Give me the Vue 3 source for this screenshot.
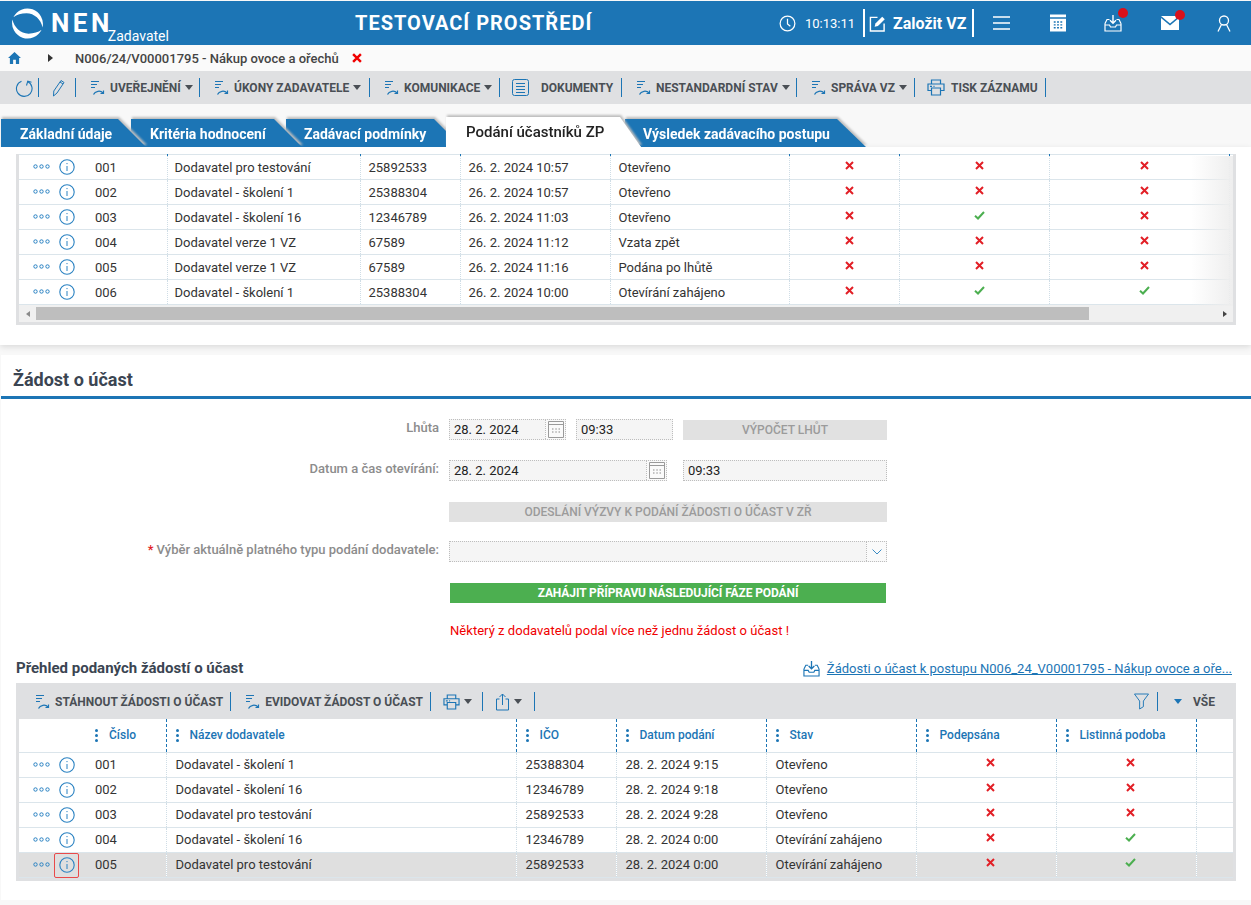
<template>
  <div class="page">
    <svg class="defs" width="0" height="0">
      <symbol id="flow" viewBox="0 0 17 17">
        <path d="M1 2.500h8M1 5.500h6M1 8.500h4" fill="none" stroke="currentColor" stroke-width="1.200" />
        <path d="M3.500 15.500c1.500-3.500 7-4.500 9.500-1.500M13.500 11.500v3h-3" fill="none" stroke="currentColor" stroke-width="1.200" />
      </symbol>
      <symbol id="info" viewBox="0 0 16 16">
        <circle cx="8" cy="8" r="7.200" fill="none" stroke="currentColor" stroke-width="1.100" />
        <path d="M8 7v5" stroke="currentColor" stroke-width="1" />
        <circle cx="8" cy="4.600" r=".7" fill="currentColor" />
      </symbol>
      <symbol id="dots" viewBox="0 0 17 5">
        <circle cx="2.500" cy="2.500" r="1.700" fill="none" stroke="currentColor" stroke-width="1" />
        <circle cx="8.500" cy="2.500" r="1.700" fill="none" stroke="currentColor" stroke-width="1" />
        <circle cx="14.500" cy="2.500" r="1.700" fill="none" stroke="currentColor" stroke-width="1" />
      </symbol>
      <symbol id="no" viewBox="0 0 9 9">
        <path d="M1 1l7 7M8 1l-7 7" stroke="#e21f26" stroke-width="2" fill="none" />
      </symbol>
      <symbol id="yes" viewBox="0 0 11 9">
        <path d="M1 4.800l3 2.700 6-6.500" stroke="#4caf50" stroke-width="2" fill="none" />
      </symbol>
      <symbol id="cal" viewBox="0 0 16 17">
        <path d="M.5.500h15v16H.5zM.5 3.500h15" fill="none" stroke="#9a9a9a" stroke-width="1" />
        <path d="M4 8h1.500M7.300 8h1.500M10.500 8h1.500M4 11h1.500M7.300 11h1.500M10.500 11h1.500" stroke="#8a8a8a" stroke-width="1.200" />
      </symbol>
      <symbol id="print" viewBox="0 0 18 17">
        <path d="M4.500 5V1h9v4M4.500 11.500h-3.500V5h16v6.500h-3.500M4.500 9h9v7h-9z" fill="none" stroke="currentColor" stroke-width="1.200" />
        <path d="M3 7.300h2M6.500 7.300h1" stroke="currentColor" stroke-width="1.200" />
      </symbol>
      <symbol id="inbox" viewBox="0 0 18 18">
        <path d="M1 9.500v7.500h16V9.500M1 9.500l2-4h2.500M17 9.500l-2-4h-2.500M1 11h4.500l1 2h5l1-2H17" fill="none" stroke="currentColor" stroke-width="1.200" />
        <path d="M9 1v8M6 6.300l3 3 3-3" fill="none" stroke="currentColor" stroke-width="1.400" />
      </symbol>
    </svg>

    <header class="topbar">
      <div class="brand">
        <svg class="logo" viewBox="0 0 34 34">
          <path d="M2.500 10.500A16 16 0 0 1 32.500 21C31 13 24 6.500 16 6.500 10.500 6.500 6 8 2.500 10.500z" fill="#fff" />
          <path d="M31.500 23.500A16 16 0 0 1 1.500 13C3 21 10 27.500 18 27.500 23.500 27.500 28 26 31.500 23.500z" fill="#fff" />
        </svg>
        <span class="nen">NEN</span>
        <span class="role">Zadavatel</span>
      </div>
      <div class="env">TESTOVACÍ PROSTŘEDÍ</div>
      <div class="clock">
        <svg viewBox="0 0 18 18" width="17" height="17"><circle cx="9" cy="9" r="7.800" fill="none" stroke="#fff" stroke-width="1.300" /><path d="M9 4v5.500l3 2.500" fill="none" stroke="#fff" stroke-width="1.300" /></svg>
        <span>10:13:11</span>
      </div>
      <div class="create">
        <svg viewBox="0 0 18 18" width="17" height="17"><path d="M9 2.500H1.500v14.500h14.500V9" fill="none" stroke="#fff" stroke-width="1.500" /><path d="M6 12.500l.8-3.500L14 1.800l2.700 2.700L9.500 11.700z" fill="#fff" /></svg>
        <span>Založit VZ</span>
      </div>
      <div class="head-icons">
        <svg viewBox="0 0 18 16" width="18" height="16"><path d="M0 2h17M0 8h17M0 14h17" stroke="#fff" stroke-width="1.600" /></svg>
        <svg viewBox="0 0 17 18" width="16" height="18"><path d="M0 0h17v3H0zM0 4.500h17V18H0z" fill="#fff" /><path d="M4 8h2M7.500 8h2M11 8h2M4 11h2M7.500 11h2M11 11h2M4 14h2M7.500 14h2M11 14h2" stroke="#1c75b5" stroke-width="1.500" /></svg>
        <span class="badged"><svg width="18" height="18"><use href="#inbox" /></svg><i></i></span>
        <span class="badged"><svg viewBox="0 0 18 14" width="18" height="14"><path d="M0 0h18L9 7.500zM0 2l9 7.500L18 2v12H0z" fill="#fff" /></svg><i></i></span>
        <svg viewBox="0 0 14 17" width="14" height="17"><circle cx="7" cy="5.500" r="4.500" fill="none" stroke="#fff" stroke-width="1.300" /><path d="M4.500 9.500L1 16.500M9.500 9.500l3.500 7" fill="none" stroke="#fff" stroke-width="1.300" /></svg>
      </div>
    </header>

    <nav class="crumbs">
      <svg viewBox="0 0 14 13" width="13" height="12"><path d="M7 0L0 6.500h2V13h3.500V8.500h3V13H12V6.500h2z" fill="#1c75b5" /></svg>
      <span class="crumb-arrow"></span>
      <span class="crumb-text">N006/24/V00001795 - Nákup ovoce a ořechů</span>
      <svg viewBox="0 0 9 9" width="10" height="10"><path d="M1 1l7 7M8 1l-7 7" stroke="#f00000" stroke-width="2.200" /></svg>
    </nav>

    <div class="toolbar">
      <svg class="tool-refresh" viewBox="0 0 18 18" width="18" height="18"><path d="M6.500 2.300a7.800 7.800 0 1 0 6 .2" fill="none" stroke="currentColor" stroke-width="1.100" /><path d="M11.500 6.500l1.300-4.300 3.700 1" fill="none" stroke="currentColor" stroke-width="1.100" /></svg>
      <b class="sep refresh-sep"></b>
      <svg class="tool-pen" viewBox="0 0 13 18" width="13" height="18"><path d="M1.500 17l.3-5L9 1.500l3 2-7 10.500zM8 3l3 2" fill="none" stroke="currentColor" stroke-width="1" /></svg>
      <b class="sep pen-sep"></b>
      <template v-for="t in tools" :key="t.label">
        <div class="tool" :style="{ width: t.width + 'px' }">
          <svg v-if="t.icon === 'flow'" class="ticon" width="17" height="17"><use href="#flow" /></svg>
          <svg v-else-if="t.icon === 'doc'" class="ticon doc" viewBox="0 0 17 17" width="17" height="17"><path d="M2.500.500h12a2 2 0 0 1 2 2v12a2 2 0 0 1-2 2h-12a2 2 0 0 1-2-2v-12a2 2 0 0 1 2-2zM4 4.500h9M4 7.500h9M4 10.500h9M4 13.500h9" fill="none" stroke="currentColor" stroke-width="1" /></svg>
          <svg v-else class="ticon print-icon" width="18" height="17"><use href="#print" /></svg>
          <span :class="{ 'label-gap': t.icon === 'doc', 'label-print': t.icon === 'print' }">{{ t.label }}</span>
          <i v-if="t.caret" class="caret"></i>
        </div>
        <b class="sep"></b>
      </template>
    </div>

    <div class="tabs">
      <div v-for="(tab, i) in tabs" :key="tab.label" class="tab-wrap" :class="'tab-' + (i + 1)">
        <div class="tab">{{ tab.label }}</div>
      </div>
    </div>

    <section class="card top-card">
      <div class="grid-box">
        <div class="ticks">
          <i v-for="x in [148, 341, 441, 591, 770, 880, 1030, 1210]" :key="x" :style="{ left: x + 'px' }"></i>
        </div>
        <table class="grid first-grid">
          <colgroup>
            <col v-for="(w, i) in topCols" :key="i" :style="{ width: w + 'px' }" />
          </colgroup>
          <tbody>
            <tr v-for="r in topRows" :key="r.no">
              <td class="acts">
                <svg class="dots" width="17" height="5"><use href="#dots" /></svg>
                <svg class="info" width="16" height="16"><use href="#info" /></svg>
              </td>
              <td>{{ r.no }}</td>
              <td class="name-cell">{{ r.name }}</td>
              <td>{{ r.ico }}</td>
              <td>{{ r.date }}</td>
              <td>{{ r.state }}</td>
              <td v-for="(f, j) in r.flags" :key="j" class="flag">
                <svg v-if="f" width="11" height="9"><use href="#yes" /></svg>
                <svg v-else width="9" height="9"><use href="#no" /></svg>
              </td>
              <td></td>
            </tr>
          </tbody>
        </table>
        <div class="fade"></div>
        <div class="hscroll">
          <i class="arrow-left"></i>
          <div class="thumb"></div>
          <i class="arrow-right"></i>
        </div>
      </div>
    </section>

    <section class="card bottom-card">
      <h2 class="title">Žádost o účast</h2>

      <div class="form">
        <div class="row">
          <label>Lhůta</label>
          <div class="field date-short"><span>28. 2. 2024</span><em><svg width="16" height="17"><use href="#cal" /></svg></em></div>
          <div class="field time-short"><span>09:33</span></div>
          <div class="btn-off calc">VÝPOČET LHŮT</div>
        </div>
        <div class="row">
          <label>Datum a čas otevírání:</label>
          <div class="field date-long"><span>28. 2. 2024</span><em><svg width="16" height="17"><use href="#cal" /></svg></em></div>
          <div class="field time-long"><span>09:33</span></div>
        </div>
        <div class="row">
          <label></label>
          <div class="btn-off wide">ODESLÁNÍ VÝZVY K PODÁNÍ ŽÁDOSTI O ÚČAST V ZŘ</div>
        </div>
        <div class="row row-tight">
          <label><span class="req">*</span>Výběr aktuálně platného typu podání dodavatele:</label>
          <div class="field select">
            <span></span>
            <em><svg viewBox="0 0 10 6" width="10" height="6"><path d="M.5.500L5 5 9.500.500" fill="none" stroke="#3c8cc4" stroke-width="1" /></svg></em>
          </div>
        </div>
        <div class="row">
          <label></label>
          <div class="btn-green">ZAHÁJIT PŘÍPRAVU NÁSLEDUJÍCÍ FÁZE PODÁNÍ</div>
        </div>
      </div>

      <p class="warn">Některý z dodavatelů podal více než jednu žádost o účast !</p>

      <div class="sub-head">
        <h3>Přehled podaných žádostí o účast</h3>
        <a class="file-link">
          <svg width="17" height="17" viewBox="0 0 18 18"><use href="#inbox" /></svg>
          <span>Žádosti o účast k postupu N006_24_V00001795 - Nákup ovoce a oře...</span>
        </a>
      </div>

      <div class="grid-box second">
        <div class="grid-tools">
          <div class="tool2"><svg class="ticon" width="17" height="17"><use href="#flow" /></svg><span>STÁHNOUT ŽÁDOSTI O ÚČAST</span></div>
          <b class="sep"></b>
          <div class="tool2"><svg class="ticon" width="17" height="17"><use href="#flow" /></svg><span>EVIDOVAT ŽÁDOST O ÚČAST</span></div>
          <b class="sep"></b>
          <div class="mini"><svg class="ticon" width="17" height="16" viewBox="0 0 18 17"><use href="#print" /></svg><i class="caret"></i></div>
          <b class="sep"></b>
          <div class="mini"><svg class="ticon" viewBox="0 0 14 18" width="15" height="18"><path d="M4 6H1v11h12V6h-3M7 12V1M4 4l3-3 3 3" fill="none" stroke="currentColor" stroke-width="1" /></svg><i class="caret"></i></div>
          <b class="sep"></b>
          <div class="tools-right">
            <svg class="ticon" viewBox="0 0 16 17" width="15" height="17"><path d="M.5.500h15L10 8v6l-4 2.500V8z" fill="none" stroke="currentColor" stroke-width="1" /></svg>
            <b class="sep"></b>
            <i class="caret blue"></i>
            <span class="vse">VŠE</span>
          </div>
        </div>
        <table class="grid wide-head">
          <colgroup>
            <col v-for="(w, i) in bottomCols" :key="i" :style="{ width: w + 'px' }" />
          </colgroup>
          <thead>
            <tr>
              <th class="no-line"></th>
              <th v-for="h in heads" :key="h" :class="{ 'no-line': h === 'Číslo' }">
                <span class="kebab"><i></i><i></i><i></i></span>{{ h }}
              </th>
              <th></th>
            </tr>
          </thead>
          <tbody>
            <tr v-for="r in bottomRows" :key="r.no" :class="{ selected: r.selected }">
              <td class="acts">
                <svg class="dots" width="17" height="5"><use href="#dots" /></svg>
                <span class="info-wrap" :class="{ focused: r.selected }"><svg class="info" width="16" height="16"><use href="#info" /></svg></span>
              </td>
              <td>{{ r.no }}</td>
              <td>{{ r.name }}</td>
              <td>{{ r.ico }}</td>
              <td>{{ r.date }}</td>
              <td>{{ r.state }}</td>
              <td v-for="(f, j) in r.flags" :key="j" class="flag">
                <svg v-if="f" width="11" height="9"><use href="#yes" /></svg>
                <svg v-else width="9" height="9"><use href="#no" /></svg>
              </td>
              <td></td>
            </tr>
          </tbody>
        </table>
      </div>
    </section>
  </div>
</template>

<script setup>
const tools = [
  { label: 'UVEŘEJNĚNÍ', icon: 'flow', caret: true, width: 123 },
  { label: 'ÚKONY ZADAVATELE', icon: 'flow', caret: true, width: 169 },
  { label: 'KOMUNIKACE', icon: 'flow', caret: true, width: 129 },
  { label: 'DOKUMENTY', icon: 'doc', caret: false, width: 121 },
  { label: 'NESTANDARDNÍ STAV', icon: 'flow', caret: true, width: 174 },
  { label: 'SPRÁVA VZ', icon: 'flow', caret: true, width: 117 },
  { label: 'TISK ZÁZNAMU', icon: 'print', caret: false, width: 130 }
];

const tabs = [
  { label: 'Základní údaje' },
  { label: 'Kritéria hodnocení' },
  { label: 'Zadávací podmínky' },
  { label: 'Podání účastníků ZP' },
  { label: 'Výsledek zadávacího postupu' }
];

const topCols = [68, 80, 193, 100, 150, 179, 110, 150, 180, 4];
const bottomCols = [68, 79, 350, 100, 150, 150, 140, 140, 37];
const heads = ['Číslo', 'Název dodavatele', 'IČO', 'Datum podání', 'Stav', 'Podepsána', 'Listinná podoba'];

const topRows = [
  { no: '001', name: 'Dodavatel pro testování', ico: '25892533', date: '26. 2. 2024 10:57', state: 'Otevřeno', flags: [0, 0, 0] },
  { no: '002', name: 'Dodavatel - školení 1', ico: '25388304', date: '26. 2. 2024 10:57', state: 'Otevřeno', flags: [0, 0, 0] },
  { no: '003', name: 'Dodavatel - školení 16', ico: '12346789', date: '26. 2. 2024 11:03', state: 'Otevřeno', flags: [0, 1, 0] },
  { no: '004', name: 'Dodavatel verze 1 VZ', ico: '67589', date: '26. 2. 2024 11:12', state: 'Vzata zpět', flags: [0, 0, 0] },
  { no: '005', name: 'Dodavatel verze 1 VZ', ico: '67589', date: '26. 2. 2024 11:16', state: 'Podána po lhůtě', flags: [0, 0, 0] },
  { no: '006', name: 'Dodavatel - školení 1', ico: '25388304', date: '26. 2. 2024 10:00', state: 'Otevírání zahájeno', flags: [0, 1, 1] }
];

const bottomRows = [
  { no: '001', name: 'Dodavatel - školení 1', ico: '25388304', date: '28. 2. 2024 9:15', state: 'Otevřeno', flags: [0, 0] },
  { no: '002', name: 'Dodavatel - školení 16', ico: '12346789', date: '28. 2. 2024 9:18', state: 'Otevřeno', flags: [0, 0] },
  { no: '003', name: 'Dodavatel pro testování', ico: '25892533', date: '28. 2. 2024 9:28', state: 'Otevřeno', flags: [0, 0] },
  { no: '004', name: 'Dodavatel - školení 16', ico: '12346789', date: '28. 2. 2024 0:00', state: 'Otevírání zahájeno', flags: [0, 1] },
  { no: '005', name: 'Dodavatel pro testování', ico: '25892533', date: '28. 2. 2024 0:00', state: 'Otevírání zahájeno', flags: [0, 1], selected: true }
];
</script>

<style>
html,
body {
  margin: 0;
  background: #f8f8f8;
}
</style>

<style scoped>
.page {
  width: 1251px;
  height: 905px;
  overflow: hidden;
  background: #f8f8f8;
  font-family: Roboto, "Liberation Sans", sans-serif;
  font-size: 13px;
  color: #333;
}

.defs {
  position: absolute;
}

.topbar {
  display: flex;
  align-items: center;
  height: 44px;
  margin-top: 1px;
  background: #1c75b5;
  color: #fff;
}

.brand {
  display: flex;
  width: 355px;
  flex: none;
  align-items: center;
  padding-left: 11px;
  box-sizing: border-box;
}

.logo {
  width: 33px;
  height: 33px;
}

.nen {
  margin-left: 7px;
  font-size: 26px;
  font-weight: 700;
  letter-spacing: 3.500px;
  line-height: 30px;
}

.role {
  margin: 26px 0 0 -5px;
  font-size: 14px;
}

.env {
  width: 424px;
  flex: none;
  font-size: 20px;
  font-weight: 700;
  letter-spacing: 1px;
}

.clock {
  display: flex;
  width: 86px;
  flex: none;
  align-items: center;
  gap: 9px;
  height: 28px;
  border-right: 2px solid #fff;
  box-sizing: border-box;
}

.create {
  display: flex;
  width: 109px;
  flex: none;
  align-items: center;
  gap: 7px;
  height: 28px;
  padding-left: 4px;
  border-right: 2px solid #fff;
  box-sizing: border-box;
  font-size: 16px;
  font-weight: 700;
}

.head-icons {
  display: flex;
  align-items: center;
  gap: 38.500px;
  margin-left: 19px;
}

.badged {
  position: relative;
  display: flex;
}

.badged i {
  position: absolute;
  top: -6px;
  right: -6px;
  width: 10px;
  height: 10px;
  border-radius: 50%;
  background: #d8111c;
}

.crumbs {
  display: flex;
  align-items: center;
  height: 26px;
  padding-left: 8px;
  background: #fafafa;
}

.crumb-arrow {
  width: 0;
  height: 0;
  margin: 0 22px 0 27px;
  border-top: 4px solid transparent;
  border-bottom: 4px solid transparent;
  border-left: 5px solid #333;
}

.crumb-text {
  width: 277px;
  font-size: 13px;
  font-weight: 500;
  color: #444;
  white-space: nowrap;
}

.toolbar {
  display: flex;
  align-items: center;
  height: 33px;
  padding-left: 15px;
  background: #dfe0e2;
  color: #1c75b5;
}

.sep {
  flex: none;
  width: 1px;
  height: 19px;
  background: #1c75b5;
}

.refresh-sep {
  margin: 0 13px 0 5px;
}

.pen-sep {
  margin-left: 10px;
}

.tool-pen {
  flex: none;
}

.tool {
  display: flex;
  flex: none;
  align-items: center;
  padding-left: 14px;
  box-sizing: border-box;
  color: #1c75b5;
}

.tool span {
  margin-left: 3px;
  font-size: 12px;
  font-weight: 700;
  color: #4a4f55;
  white-space: nowrap;
}

.tool .label-gap {
  margin-left: 12px;
}

.tool .label-print {
  margin-left: 6px;
}

.tool .doc {
  margin-left: -2px;
}

.print-icon {
  margin-left: -2px;
}

.ticon {
  flex: none;
}

.caret {
  flex: none;
  width: 0;
  height: 0;
  margin-left: 4px;
  border-top: 5px solid #4a4f55;
  border-left: 4px solid transparent;
  border-right: 4px solid transparent;
}

.caret.blue {
  border-top-color: #1c75b5;
}

.tabs {
  display: flex;
  height: 30px;
  margin-top: 13px;
  padding-left: 1px;
}

.tab-wrap {
  position: relative;
  flex: none;
  filter: drop-shadow(1px -2px 1px #bdbdbd);
}

.tab {
  display: flex;
  align-items: center;
  height: 30px;
  padding-top: 3px;
  box-sizing: border-box;
  background: #1c75b5;
  color: #fff;
  font-size: 14px;
  font-weight: 700;
  white-space: nowrap;
}

.tab-1 {
  z-index: 4;
  width: 146px;
}

.tab-1 .tab {
  padding-left: 19px;
  clip-path: polygon(0 2px, 117px 2px, 145px 30px, 0 30px);
}

.tab-2 {
  z-index: 3;
  width: 171px;
  margin-left: -16px;
}

.tab-2 .tab {
  padding-left: 19px;
  clip-path: polygon(0 2px, 143px 2px, 171px 30px, 0 30px);
}

.tab-3 {
  z-index: 2;
  width: 176px;
  margin-left: -16px;
}

.tab-3 .tab {
  padding-left: 18px;
  clip-path: polygon(0 2px, 148px 2px, 176px 30px, 0 30px);
}

.tab-4 {
  z-index: 5;
  width: 196px;
  margin-left: -16px;
}

.tab-4 .tab {
  padding: 0 0 1px 20px;
  background: #fff;
  color: #222;
  font-size: 15px;
  font-weight: 500;
  clip-path: polygon(0 0, 174px 0, 195px 30px, 0 30px);
}

.tab-5 {
  z-index: 1;
  width: 241px;
  margin-left: -17px;
}

.tab-5 .tab {
  padding-left: 18px;
  clip-path: polygon(0 2px, 212px 2px, 241px 30px, 16px 30px, 0 13px);
}

.card {
  background: #fff;
}

.top-card {
  height: 198px;
  padding: 5px 15px 0 16px;
  box-sizing: border-box;
  box-shadow: 0 2px 6px rgba(0, 0, 0, 0.12);
}

.grid-box {
  position: relative;
  border: 3px solid #dfe0e2;
  border-width: 0 3px 3px;
  background: #fff;
}

.ticks i {
  position: absolute;
  top: 0;
  width: 1px;
  height: 2px;
  background: #1c75b5;
}

.grid {
  width: 1214px;
  table-layout: fixed;
  border-collapse: collapse;
  border-top: 1px solid #dbe5eb;
  margin-top: 2px;
}

.grid td {
  height: 24px;
  padding: 0 8px;
  border-bottom: 1px solid #dbe5eb;
  border-left: 1px dotted #cfdde6;
  color: #333;
  white-space: nowrap;
  overflow: hidden;
}

.grid td:first-child,
.grid td:nth-child(2) {
  border-left: 0;
}

.first-grid .name-cell {
  padding-left: 7px;
}

.wide-head td:nth-child(n + 3) {
  padding-left: 9px;
}

.grid .flag {
  padding: 0 0 0 10px;
}

.acts {
  position: relative;
}

.grid .acts {
  padding: 0;
  overflow: visible;
}

.dots {
  position: absolute;
  left: 14px;
  top: 9px;
  color: #2a82c2;
}

.info {
  position: absolute;
  left: 40px;
  top: 4px;
  color: #2a82c2;
}

.flag svg {
  display: block;
  margin: -4px auto 0;
}

.fade {
  position: absolute;
  top: 2px;
  right: 0;
  width: 42px;
  height: 150px;
  background: linear-gradient(90deg, rgba(238, 238, 238, 0), #eee);
  pointer-events: none;
}

.hscroll {
  display: flex;
  align-items: center;
  height: 17px;
  background: #f0f0f0;
}

.thumb {
  width: 1053px;
  height: 13px;
  margin-left: 6px;
  background: #bebebe;
}

.arrow-left,
.arrow-right {
  flex: none;
  width: 0;
  height: 0;
  border-top: 3.500px solid transparent;
  border-bottom: 3.500px solid transparent;
}

.arrow-left {
  margin-left: 7px;
  border-right: 4px solid #8a8a8a;
}

.arrow-right {
  margin-left: auto;
  margin-right: 6px;
  border-left: 4px solid #444;
}

.bottom-card {
  height: 545px;
  margin: 10px 0 0 1px;
  overflow: hidden;
}

.title {
  height: 44px;
  margin: 0;
  padding: 14px 0 0 12px;
  box-sizing: border-box;
  border-bottom: 3px solid #1c75b5;
  font-size: 18px;
  line-height: 22px;
  font-weight: 700;
  color: #3b4552;
}

.form {
  display: flex;
  flex-direction: column;
  gap: 20px;
  margin-top: 20px;
}

.row {
  display: flex;
  align-items: center;
  height: 21px;
  color: #8a8a8a;
}

.row-tight {
  margin-top: -1px;
}

.row label {
  width: 438px;
  flex: none;
  margin: -4px 10px 0 0;
  text-align: right;
  font-size: 13px;
  font-weight: 500;
  color: #8c8c8c;
  white-space: nowrap;
}

.req {
  margin-right: 3px;
  color: #e21f26;
}

.field {
  display: flex;
  height: 21px;
  box-sizing: border-box;
  align-items: center;
  border: 1px dotted #bdbdbd;
  background: #f5f5f5;
  color: #222;
}

.field span {
  flex: 1;
  padding-left: 4px;
}

.field em {
  display: flex;
  width: 19px;
  height: 19px;
  align-items: center;
  justify-content: center;
  border-left: 1px dotted #bdbdbd;
  background: #fafafa;
  font-style: normal;
}

.date-short {
  width: 117px;
}

.time-short {
  width: 97px;
  margin-left: 10px;
}

.date-long {
  width: 218px;
}

.time-long {
  width: 204px;
  margin-left: 16px;
}

.select {
  width: 438px;
}

.btn-off {
  display: flex;
  height: 20px;
  align-items: center;
  justify-content: center;
  background: #e1e1e1;
  color: #9b9b9b;
  font-size: 12px;
  font-weight: 500;
}

.calc {
  width: 204px;
  margin-left: 10px;
}

.wide {
  width: 438px;
}

.btn-green {
  display: flex;
  width: 436px;
  height: 20px;
  margin-left: 1px;
  align-items: center;
  justify-content: center;
  background: #4caf50;
  color: #fff;
  font-size: 12px;
  font-weight: 700;
  letter-spacing: -0.1px;
}

.warn {
  margin: 19px 0 0 449px;
  color: #f00000;
  font-size: 13px;
  line-height: 18px;
  letter-spacing: 0.04px;
}

.sub-head {
  display: flex;
  align-items: center;
  justify-content: space-between;
  height: 20px;
  margin-top: 18px;
  padding: 0 19px 0 15px;
}

.sub-head h3 {
  margin: 0;
  font-size: 15px;
  font-weight: 700;
  color: #3b4552;
}

.file-link {
  display: flex;
  align-items: center;
  gap: 7px;
  color: #1c75b5;
}

.file-link span {
  text-decoration: underline;
}

.second {
  width: 1214px;
  margin: 5px 0 0 15px;
  box-sizing: content-box;
}

.grid-tools {
  display: flex;
  align-items: center;
  height: 36px;
  margin: 0 -3px;
  padding: 1px 0 0 19px;
  box-sizing: border-box;
  background: #dfe0e2;
  color: #1c75b5;
}

.tool2 {
  display: flex;
  align-items: center;
  gap: 3px;
  padding-right: 7px;
}

.sep + .tool2 {
  margin-left: 14px;
}

.tool2 span {
  font-size: 12px;
  font-weight: 700;
  color: #4a4f55;
  white-space: nowrap;
}

.mini {
  display: flex;
  flex: none;
  width: 51px;
  align-items: center;
  padding-left: 12px;
  box-sizing: border-box;
}

.tools-right {
  display: flex;
  align-items: center;
  margin-left: auto;
  margin-right: 21px;
}

.tools-right .sep {
  margin: 0 11px 0 8px;
}

.tools-right .caret {
  margin: 0 11px 0 5px;
}

.vse {
  font-size: 12px;
  font-weight: 700;
  color: #4a4f55;
}

.wide-head {
  border-top: 0;
  margin-top: 0;
}

.wide-head th {
  height: 33px;
  padding: 0 0 0 9px;
  box-sizing: border-box;
  border-bottom: 1px solid #dbe5eb;
  border-left: 1px dashed #1c75b5;
  color: #1c75b5;
  font-size: 12px;
  font-weight: 500;
  text-align: left;
  white-space: nowrap;
}

.wide-head th.no-line {
  padding-left: 8px;
  border-left: 0;
}

.kebab {
  display: inline-flex;
  flex-direction: column;
  gap: 2px;
  margin-right: 11px;
  vertical-align: middle;
}

.kebab i {
  width: 3px;
  height: 3px;
  border-radius: 50%;
  background: #1c75b5;
}

.selected td {
  background: #dfdfdf;
  border-top: 1px solid #b9b9b9;
}

.info-wrap {
  position: absolute;
  left: 35px;
  top: 0;
  width: 25px;
  height: 25px;
  box-sizing: border-box;
}

.info-wrap .info {
  left: 5px;
  top: 4px;
}

.info-wrap.focused {
  border: 1px solid #e94a4a;
  border-radius: 2px;
}

.info-wrap.focused .info {
  left: 4px;
  top: 3px;
}
</style>
